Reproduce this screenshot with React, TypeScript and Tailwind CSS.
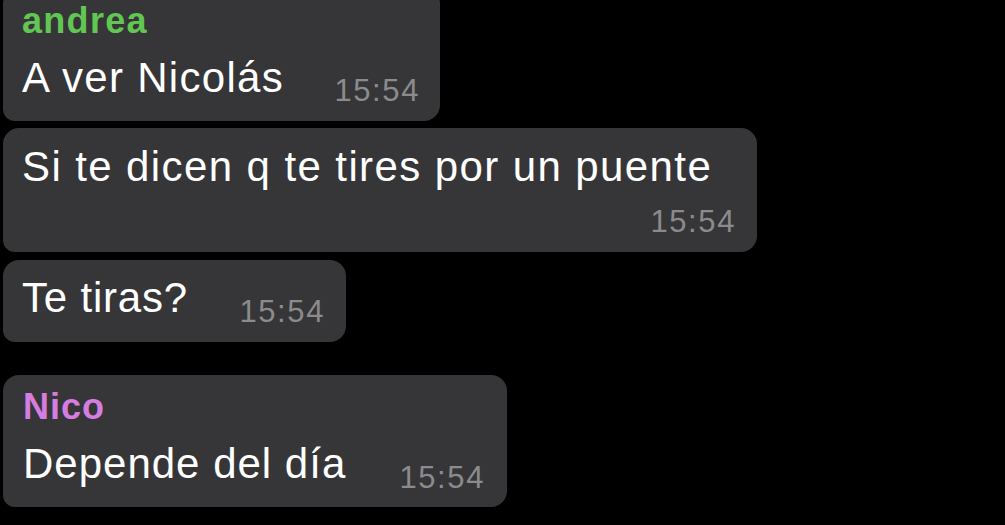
import React from "react";

const font = { fontFamily: '"Liberation Sans", Arial, sans-serif' };

function Time() {
  return (
    <span className="text-[31px] leading-[36px] tracking-[1.6px] text-[#8b8b8d] whitespace-nowrap">
      15:54
    </span>
  );
}

export default function App() {
  return (
    <div
      className="w-[1005px] h-[525px] bg-black overflow-hidden flex flex-col items-start pl-[3px]"
      style={font}
    >
      {/* Bubble 1 */}
      <div className="w-[437px] mt-[-12px] bg-[#363638] rounded-[16px] rounded-bl-[12px] pl-[19px] pr-[20px] pt-[13px] pb-[12px] flex flex-col">
        <div className="text-[36px] leading-[40px] font-bold tracking-[1.3px] text-[#62c653]">andrea</div>
        <div className="flex justify-between items-start mt-[13px]">
          <span className="text-[42px] leading-[48px] text-white whitespace-nowrap tracking-[1.3px]">A ver Nicolás</span>
          <span className="mt-[19px]"><Time /></span>
        </div>
      </div>

      {/* Bubble 2 */}
      <div className="w-[754px] mt-[7px] bg-[#363638] rounded-[16px] rounded-bl-[12px] pl-[19px] pr-[21px] pt-[15px] pb-[12px] flex flex-col">
        <span className="text-[42px] leading-[48px] text-white whitespace-nowrap tracking-[1.4px]">
          Si te dicen q te tires por un puente
        </span>
        <span className="self-end mt-[13px]"><Time /></span>
      </div>

      {/* Bubble 3 */}
      <div className="w-[343px] mt-[8px] bg-[#363638] rounded-[16px] rounded-bl-[12px] pl-[19px] pr-[21px] pt-[14px] pb-[12px] flex justify-between items-start">
        <span className="text-[42px] leading-[48px] text-white whitespace-nowrap tracking-[0.8px]">Te tiras?</span>
        <span className="mt-[20px]"><Time /></span>
      </div>

      {/* Bubble 4 */}
      <div className="w-[504px] mt-[33px] bg-[#363638] rounded-[16px] rounded-bl-[12px] pl-[20px] pr-[22px] pt-[12px] pb-[11px] flex flex-col">
        <div className="text-[36px] leading-[40px] font-bold tracking-[1px] text-[#d57de0]">Nico</div>
        <div className="flex justify-between items-start mt-[13px]">
          <span className="text-[42px] leading-[48px] text-white whitespace-nowrap tracking-[1px]">Depende del día</span>
          <span className="mt-[20px]"><Time /></span>
        </div>
      </div>
    </div>
  );
}
